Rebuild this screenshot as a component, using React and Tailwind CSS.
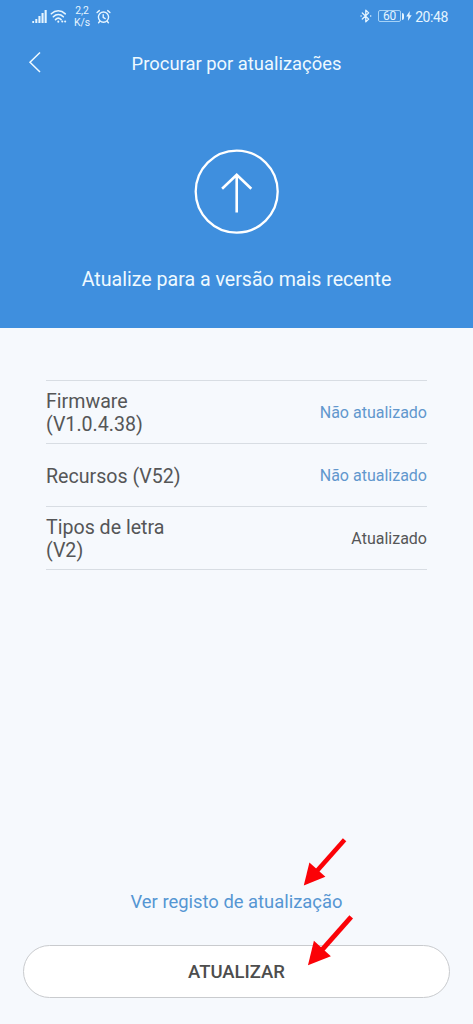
const rows = [
  { name: 'Firmware', version: '(V1.0.4.38)', status: 'Não atualizado', pending: true, wrap: true },
  { name: 'Recursos', version: '(V52)', status: 'Não atualizado', pending: true, wrap: false },
  { name: 'Tipos de letra', version: '(V2)', status: 'Atualizado', pending: false, wrap: true },
];

const SignalIcon = () => (
  <svg className="w-4 h-4" viewBox="0 0 16 16" fill="currentColor">
    <rect x="0.3" y="13" width="1.8" height="2" />
    <rect x="3.3" y="11" width="2" height="4" />
    <rect x="6.4" y="8" width="2.1" height="7" />
    <rect x="9.5" y="5" width="2.1" height="10" />
    <rect x="12.6" y="2" width="2.1" height="13" />
  </svg>
);

const WifiIcon = () => (
  <svg
    className="w-[18px] h-4"
    viewBox="0 0 18 16"
    fill="none"
    stroke="currentColor"
    strokeWidth="1.6"
    strokeLinecap="round"
  >
    <path d="M1.3 5.8C5.5 1.7 11 1.7 15.3 5.8" />
    <path d="M3.3 8.8C6.3 5.8 10.3 5.8 13.3 8.8" />
    <path d="M5.5 11.6C7.3 9.8 9.3 9.8 11.1 11.6" />
    <path d="M8.3 13.6v.2" strokeWidth="2" />
    <path d="M12.2 13.4h.1M15.1 13.4h.1" strokeWidth="2" />
  </svg>
);

const AlarmIcon = () => (
  <svg
    className="w-[15px] h-[15px]"
    viewBox="0 0 15 15"
    fill="none"
    stroke="currentColor"
    strokeWidth="1.4"
    strokeLinecap="round"
  >
    <circle cx="7.5" cy="8.1" r="5.1" />
    <path d="M7.2 5.6v2.8l2 1.2M1.1 3.5l2.2-1.9M13.9 3.5l-2.2-1.9M3.6 12.5l-1 1.2M11.4 12.5l1 1.2" />
  </svg>
);

const BluetoothIcon = () => (
  <svg
    className="w-3 h-4"
    viewBox="0 0 12 16"
    fill="none"
    stroke="currentColor"
    strokeWidth="1.3"
    strokeLinejoin="round"
    strokeLinecap="round"
  >
    <path d="M2.3 5l6.4 6.1-2.9 2.8V2.1l2.9 2.8L2.3 11M1 8h.2M10.6 8h.2" />
  </svg>
);

const StatusBar = () => (
  <div className="flex items-center h-8 pl-8 pr-[25px] text-[#e6f5ff]">
    <SignalIcon />
    <div className="ml-[2px]">
      <WifiIcon />
    </div>
    <div className="ml-[6px] mt-[2px] w-4 text-center text-[10.4px] leading-[12px]">
      <p>2,2</p>
      <p>K/s</p>
    </div>
    <div className="ml-[6px]">
      <AlarmIcon />
    </div>
    <div className="ml-auto flex items-center">
      <BluetoothIcon />
      <div className="ml-[6px] flex items-center justify-center w-[23px] h-3 border border-[#a5d2f7] rounded-[2px] text-[12px] leading-none">
        60
      </div>
      <div className="ml-px w-[2px] h-[7px] rounded-r-sm bg-[#e6f5ff]" />
      <svg className="ml-[2px] w-[6px] h-[10px]" viewBox="0 0 6 10" fill="currentColor">
        <path d="M3.8 0L.2 5.6h2.1L1.9 10l3.8-5.8H3.5z" />
      </svg>
      <span className="ml-[3px] pt-px text-[14px] leading-none tracking-[-0.4px]">20:48</span>
    </div>
  </div>
);

const PointerArrow = ({ className }) => (
  <svg className={className} viewBox="0 0 46 50">
    <path d="M41.6 1.8L13 34" stroke="#fb0207" strokeWidth="4.6" fill="none" />
    <path d="M0.8 47.5L6.4 24.4L22.4 38.8z" fill="#fb0207" />
  </svg>
);

const App = () => {
  return (
    <div className="relative flex flex-col w-full h-screen overflow-hidden bg-[#f6f9fd] font-['Roboto',sans-serif]">
      {/* Header */}
      <header className="h-[328px] shrink-0 bg-[#3f8fde] text-[#eef9ff]">
        <StatusBar />
        <div className="relative flex items-center justify-center h-[62px]">
          <button className="absolute left-[28px] top-[19px]" aria-label="Voltar">
            <svg
              className="w-[14px] h-[22px]"
              viewBox="0 0 14 22"
              fill="none"
              stroke="currentColor"
              strokeWidth="1.5"
            >
              <path d="M12 1.5L2 11.2L12 21" />
            </svg>
          </button>
          <h1 className="pt-px text-[18.4px]">Procurar por atualizações</h1>
        </div>
        <div className="flex flex-col items-center pt-[55px]">
          <svg
            className="w-[86px] h-[86px]"
            viewBox="0 0 86 86"
            fill="none"
            stroke="white"
            strokeWidth="2.3"
          >
            <circle cx="42.7" cy="42.6" r="41" />
            <path d="M42.7 63.5V26M28.1 39.8L42.7 25.8L57.3 39.8" strokeWidth="2.6" />
          </svg>
          <p className="mt-[30px] text-[19.6px] leading-[30px]">Atualize para a versão mais recente</p>
        </div>
      </header>

      {/* Version list */}
      <ul className="mt-[52px] mx-[46px] border-t border-[#d8dde3]">
        {rows.map((row) => (
          <li
            key={row.name}
            className="flex items-center justify-between h-[63px] pt-[2px] border-b border-[#d8dde3] text-[#555657]"
          >
            <p className="text-[19.6px] leading-[23px]">
              {row.name} {row.wrap && <br />}
              {row.version}
            </p>
            <span className={row.pending ? 'text-[16px] text-[#6197cd]' : 'text-[16px]'}>
              {row.status}
            </span>
          </li>
        ))}
      </ul>

      {/* Footer actions */}
      <footer className="mt-auto px-[23px] pb-[26px] text-center">
        <a className="block text-[18.4px] leading-6 text-[#5596d3]">Ver registo de atualização</a>
        <button className="mt-[31px] w-full h-[53px] pt-[2px] rounded-full border border-[#c9cbce] bg-white text-[18.5px] font-medium text-[#4d4d4d]">
          ATUALIZAR
        </button>
      </footer>

      <PointerArrow className="absolute left-[303px] top-[838px] w-[46px] h-[50px]" />
      <PointerArrow className="absolute left-[307px] top-[915px] w-[49px] h-[53px]" />
    </div>
  );
};

export default App;
